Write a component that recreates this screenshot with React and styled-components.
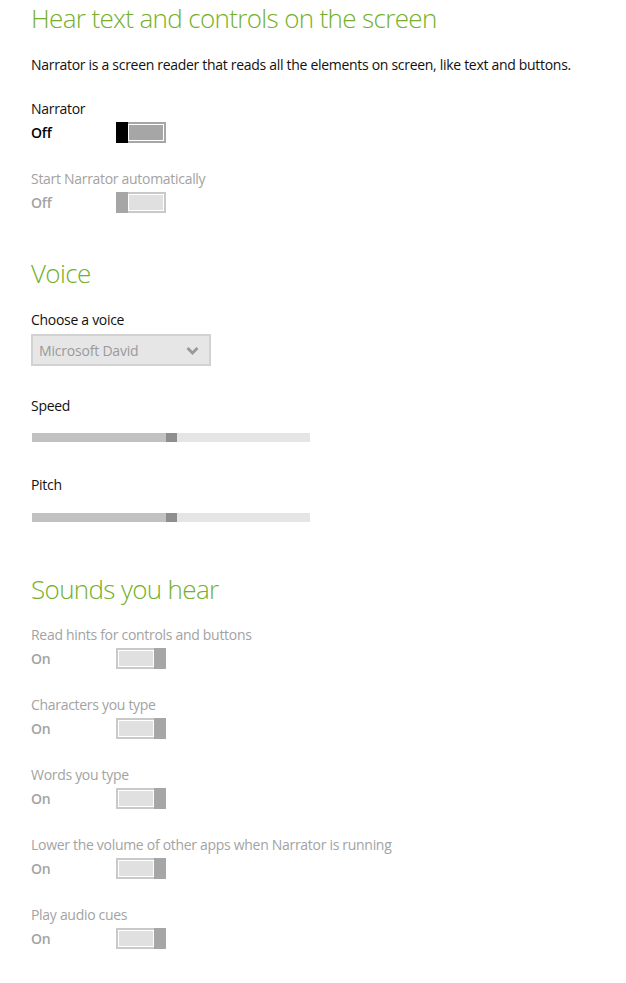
import React from "react";
import styled, { createGlobalStyle } from "styled-components";

const Global = createGlobalStyle`
  html, body { margin: 0; padding: 0; background: #fff; }
  body { font-family: "Open Sans", "Noto Sans", sans-serif; color: #000; }
`;

const Page = styled.div`
  display: flex;
  flex-direction: column;
  padding: 0 0 40px 31px;
  width: 626px;
  box-sizing: border-box;
`;

const Heading = styled.h2`
  margin: ${(p) => p.$mt || 0}px 0 0 0;
  font-size: 26px;
  font-weight: 300;
  line-height: 36px;
  color: #74b02c;
  letter-spacing: -0.65px;
`;

const Text = styled.div`
  margin-top: ${(p) => p.$mt || 0}px;
  font-size: 14px;
  line-height: 20px;
  color: ${(p) => (p.$muted ? "#a3a3a3" : "#111")};
  letter-spacing: -0.3px;
`;

const Setting = styled.div`
  display: flex;
  flex-direction: column;
  gap: 3px;
  margin-top: ${(p) => p.$mt || 0}px;
`;

const ToggleRow = styled.div`
  display: flex;
  align-items: center;
  height: 21px;
`;

const StateText = styled.span`
  width: 85px;
  font-size: 14px;
  line-height: 20px;
  font-weight: 600;
  letter-spacing: -0.2px;
  color: ${(p) => (p.$muted ? "#a3a3a3" : "#000")};
`;

const Switch = styled.div`
  display: flex;
  flex-direction: ${(p) => (p.$on ? "row-reverse" : "row")};
  width: 50px;
  height: 21px;
`;

const Thumb = styled.div`
  width: 12px;
  flex: none;
  background: ${(p) => p.$color};
`;

const Track = styled.div`
  flex: 1;
  box-sizing: border-box;
  border: 2px solid ${(p) => p.$border};
  ${(p) => (p.$on ? "border-right: none;" : "border-left: none;")}
  background: ${(p) => p.$fill};
  box-shadow: inset 0 0 0 1px #fff;
`;

const Toggle = ({ on, active }) => {
  const thumb = active ? "#000" : "#a6a6a6";
  const border = active ? "#a6a6a6" : "#c9c9c9";
  const fill = active ? "#a6a6a6" : "#e0e0e0";
  return (
    <Switch $on={on}>
      <Thumb $color={thumb} />
      <Track $on={on} $border={border} $fill={fill} />
    </Switch>
  );
};

const ToggleSetting = ({ label, on, active, mt }) => (
  <Setting $mt={mt}>
    <Text $muted={!active}>{label}</Text>
    <ToggleRow>
      <StateText $muted={!active}>{on ? "On" : "Off"}</StateText>
      <Toggle on={on} active={active} />
    </ToggleRow>
  </Setting>
);

const Select = styled.div`
  margin-top: 4px;
  width: 180px;
  height: 32px;
  box-sizing: border-box;
  border: 2px solid #d2d2d2;
  background: #e6e6e6;
  display: flex;
  align-items: center;
  justify-content: space-between;
  padding: 0 10px 0 6px;
  font-size: 14px;
  color: #9a9a9a;
  letter-spacing: -0.2px;
`;

const Slider = styled.div`
  margin: ${(p) => p.$mt || 0}px 0 0 1px;
  width: 278px;
  height: 9px;
  display: flex;
`;

const SliderPart = styled.div`
  background: ${(p) => p.$color};
  width: ${(p) => (p.$w ? `${p.$w}px` : "auto")};
  flex: ${(p) => (p.$w ? "none" : 1)};
`;

const SliderBar = ({ mt }) => (
  <Slider $mt={mt}>
    <SliderPart $color="#c1c1c1" $w={134} />
    <SliderPart $color="#8e8e8e" $w={11} />
    <SliderPart $color="#e5e5e5" />
  </Slider>
);

const Chevron = () => (
  <svg width="13" height="9" viewBox="0 0 13 9">
    <path d="M1.5 2 L6.5 7 L11.5 2" fill="none" stroke="#999" strokeWidth="2.8" />
  </svg>
);

export default function App() {
  return (
    <>
      <Global />
      <Page>
        <Heading>Hear text and controls on the screen</Heading>
        <Text $mt={19}>
          Narrator is a screen reader that reads all the elements on screen, like text and buttons.
        </Text>
        <ToggleSetting label="Narrator" on={false} active mt={24} />
        <ToggleSetting label="Start Narrator automatically" on={false} mt={26} />

        <Heading $mt={42}>Voice</Heading>
        <Text $mt={19}>Choose a voice</Text>
        <Select>
          <span>Microsoft David</span>
          <Chevron />
        </Select>
        <Text $mt={30}>Speed</Text>
        <SliderBar mt={17} />
        <Text $mt={33}>Pitch</Text>
        <SliderBar mt={18} />

        <Heading $mt={49}>Sounds you hear</Heading>
        <ToggleSetting label="Read hints for controls and buttons" on mt={18} />
        <ToggleSetting label="Characters you type" on mt={26} />
        <ToggleSetting label="Words you type" on mt={26} />
        <ToggleSetting label="Lower the volume of other apps when Narrator is running" on mt={26} />
        <ToggleSetting label="Play audio cues" on mt={26} />
      </Page>
    </>
  );
}
